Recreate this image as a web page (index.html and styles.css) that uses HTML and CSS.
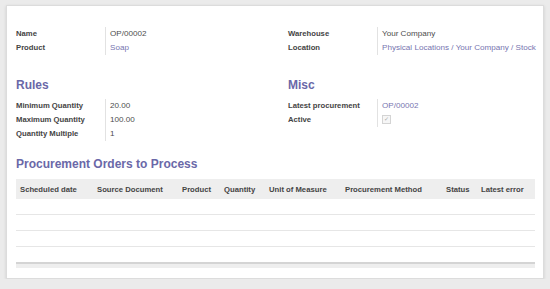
FILE: index.html
```html
<!DOCTYPE html>
<html lang="en">
<head>
  <meta charset="UTF-8">
  <title>Orderpoint OP/00002</title>
  <link rel="stylesheet" href="styles.css">
</head>
<body>

  <div class="sheet">
    <div class="columns">
      <div class="col">
        <table class="group">
          <tr><td class="label">Name</td><td class="value">OP/00002</td></tr>
          <tr><td class="label">Product</td><td class="value"><a href="#">Soap</a></td></tr>
        </table>
        <h3 class="heading">Rules</h3>
        <table class="group">
          <tr><td class="label">Minimum Quantity</td><td class="value">20.00</td></tr>
          <tr><td class="label">Maximum Quantity</td><td class="value">100.00</td></tr>
          <tr><td class="label">Quantity Multiple</td><td class="value">1</td></tr>
        </table>
      </div>
      <div class="col">
        <table class="group">
          <tr><td class="label">Warehouse</td><td class="value">Your Company</td></tr>
          <tr><td class="label">Location</td><td class="value"><a href="#">Physical Locations / Your Company / Stock</a></td></tr>
        </table>
        <h3 class="heading">Misc</h3>
        <table class="group">
          <tr><td class="label">Latest procurement</td><td class="value"><a href="#">OP/00002</a></td></tr>
          <tr><td class="label">Active</td><td class="value"><span class="check">&#10003;</span></td></tr>
        </table>
      </div>
    </div>

    <h3 class="heading heading-list">Procurement Orders to Process</h3>

    <table class="list">
      <colgroup>
        <col style="width: 77px">
        <col style="width: 85px">
        <col style="width: 42px">
        <col style="width: 45px">
        <col style="width: 76px">
        <col style="width: 101px">
        <col style="width: 35px">
        <col>
      </colgroup>
      <thead>
        <tr>
          <th>Scheduled date</th>
          <th>Source Document</th>
          <th>Product</th>
          <th>Quantity</th>
          <th>Unit of Measure</th>
          <th>Procurement Method</th>
          <th>Status</th>
          <th>Latest error</th>
        </tr>
      </thead>
      <tbody>
        <tr><td colspan="8"></td></tr>
        <tr><td colspan="8"></td></tr>
        <tr><td colspan="8"></td></tr>
        <tr class="last"><td colspan="8"></td></tr>
      </tbody>
      <tfoot>
        <tr><td colspan="8"></td></tr>
      </tfoot>
    </table>
  </div>

</body>
</html>
```

FILE: styles.css
```css
body {
  margin: 0;
  padding: 5px 5px 0 6px;
  background: #ebebeb;
  font-family: "Liberation Sans", Arial, sans-serif;
  font-size: 8px;
  color: #4c4c4c;
}
.sheet {
  background: #fff;
  border: 1px solid #dcdcdc;
  box-shadow: 0 1px 3px rgba(0,0,0,0.12);
  width: 518px;
  height: 251px;
  padding: 21px 9px 0 9px;
}
.columns {
  display: flex;
}
.col {
  width: 272px;
  flex: none;
}
.col + .col {
  flex: 1;
  min-width: 0;
}
.group {
  border-collapse: collapse;
}
.group td {
  height: 14px;
  padding: 0;
  line-height: 14px;
  white-space: nowrap;
}
.label {
  width: 89px;
  min-width: 89px;
  font-weight: bold;
  font-size: 7.7px;
  color: #444;
}
.value {
  border-left: 1px solid #e2e2e2;
  padding-left: 4px !important;
  font-size: 8.1px;
}
.value a {
  color: #7775b0;
  text-decoration: none;
}
.check {
  display: inline-block;
  width: 7px;
  height: 7px;
  border: 1px solid #d4d4d4;
  background: #f6f6f6;
  color: #aaa;
  font-size: 6px;
  line-height: 7px;
  text-align: center;
  vertical-align: middle;
}
.heading {
  margin: 22px 0 6px;
  font-size: 12px;
  line-height: 16px;
  color: #6a68a8;
}
.heading-list {
  margin: 15px 0 7px;
}
.list {
  width: 519px;
  border-collapse: collapse;
  table-layout: fixed;
}
.list th {
  height: 20px;
  padding: 0 0 0 4px;
  background: #eeeeee;
  font-size: 7.7px;
  text-align: left;
  color: #444;
  white-space: nowrap;
}
.list tbody td {
  height: 15px;
  padding: 0;
  border-bottom: 1px solid #e6e6e6;
}
.list tbody tr.last td {
  border-bottom: none;
}
.list tfoot td {
  height: 4px;
  padding: 0;
  border-top: 2px solid #d4d4d4;
  background: #eeeeee;
}
```
